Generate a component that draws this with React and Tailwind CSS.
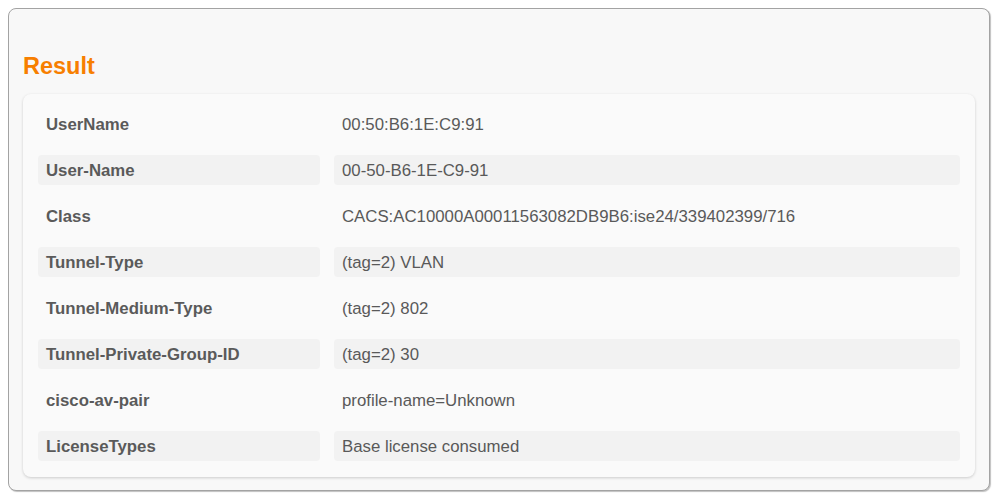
export default function App() {
  const rows = [
    ["UserName", "00:50:B6:1E:C9:91"],
    ["User-Name", "00-50-B6-1E-C9-91"],
    ["Class", "CACS:AC10000A00011563082DB9B6:ise24/339402399/716"],
    ["Tunnel-Type", "(tag=2) VLAN"],
    ["Tunnel-Medium-Type", "(tag=2) 802"],
    ["Tunnel-Private-Group-ID", "(tag=2) 30"],
    ["cisco-av-pair", "profile-name=Unknown"],
    ["LicenseTypes", "Base license consumed"],
  ];
  return (
    <div className="w-[999px] h-[504px] bg-white pt-[8px] pl-[8px]" style={{ fontFamily: '"Liberation Sans", Arial, sans-serif' }}>
      <div className="w-[982px] rounded-[8px] border border-[#a3a3a3] bg-[#f8f8f8] shadow-[1px_1px_1px_rgba(0,0,0,0.25)] pt-[43px] pb-[13px] px-[14px]">
        <div className="text-[23.5px] leading-[28px] font-bold text-[#f77f00] mb-[14px]">Result</div>
        <div className="rounded-[8px] bg-[#fafafa] shadow-[0_1px_3px_rgba(0,0,0,0.18)] px-[15px] pt-[15px] pb-[16px] flex flex-col gap-[16px]">
          {rows.map(([k, v], i) => (
            <div key={k} className="flex gap-[14px] h-[30px]">
              <div className={`w-[282px] flex items-center pl-[8px] pt-[2px] rounded-[4px] text-[16.8px] font-bold text-[#5a5a5a] ${i % 2 === 1 ? "bg-[#f2f2f2]" : ""}`}>{k}</div>
              <div className={`w-[626px] flex items-center pl-[8px] pt-[2px] rounded-[4px] text-[16.8px] text-[#595959] ${i % 2 === 1 ? "bg-[#f2f2f2]" : ""}`}>{v}</div>
            </div>
          ))}
        </div>
      </div>
    </div>
  );
}
